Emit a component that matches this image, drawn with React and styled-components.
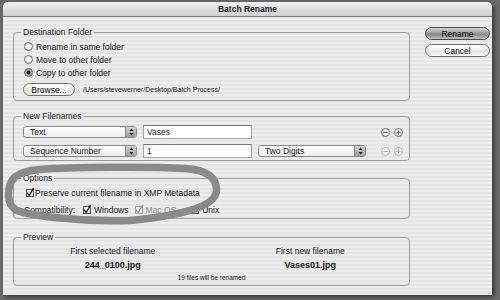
import React from "react";
import styled, { createGlobalStyle } from "styled-components";

const GlobalStyle = createGlobalStyle`
  html, body { margin: 0; padding: 0; }
  body {
    width: 500px;
    height: 300px;
    overflow: hidden;
    background: #6c6c6c;
    font-family: "Liberation Sans", Arial, sans-serif;
    color: #161616;
  }
`;

const Window = styled.div`
  position: relative;
  margin: 2px 0 0 3px;
  width: 489px;
  height: 293px;
  border-radius: 5px 5px 0 0;
  overflow: hidden;
  background: repeating-linear-gradient(to bottom, #ededed 0 2px, #e4e4e4 2px 4px);
  box-shadow: 2px 2px 5px rgba(0, 0, 0, 0.55);
`;

const TitleBar = styled.div`
  height: 14px;
  line-height: 14px;
  border-bottom: 1px solid #7a7a7a;
  background: linear-gradient(#f3f3f3, #cfcfcf);
  text-align: center;
  font-size: 8.5px;
  font-weight: bold;
  color: #222;
`;

const Body = styled.div`
  display: flex;
  padding: 10px 0 0 10px;
`;

const Main = styled.div`
  width: 397px;
  display: flex;
  flex-direction: column;
`;

const Side = styled.div`
  margin-left: 15px;
  display: flex;
  flex-direction: column;
  gap: 4px;
`;

const PushButton = styled.div`
  box-sizing: border-box;
  width: ${(p) => p.$w || 65}px;
  height: 13px;
  border-radius: 7px;
  border: 1px solid ${(p) => (p.$default ? "#4a4a4a" : "#6e6e6e")};
  background: ${(p) =>
    p.$default
      ? "linear-gradient(#d4d4d4 0%, #a0a0a0 45%, #858585 55%, #c0c0c0 100%)"
      : "linear-gradient(#ffffff 0%, #f2f2f2 45%, #e2e2e2 55%, #fbfbfb 100%)"};
  display: flex;
  align-items: center;
  justify-content: center;
  font-size: 8.5px;
  color: #111;
`;

const Group = styled.fieldset`
  margin: ${(p) => p.$gap || 0}px 0 0 0;
  padding: 0;
  border: 1px solid #9c9c9c;
  border-radius: 4px;
  min-width: 0;
`;

const Legend = styled.legend`
  padding: 0 2px;
  margin-left: 7px;
  font-size: 8.5px;
  line-height: 10px;
  color: #1a1a1a;
`;

const GroupBody = styled.div`
  padding: ${(p) => p.$pad};
`;

const OptionRow = styled.div`
  display: flex;
  align-items: center;
  height: 13px;
  gap: 3px;
  font-size: 8.5px;
  margin-left: 1px;
`;

const Radio = styled.span`
  box-sizing: border-box;
  width: 9px;
  height: 9px;
  border-radius: 50%;
  border: 1px solid #666;
  background: ${(p) =>
    p.$on
      ? "radial-gradient(circle, #222 0 1.6px, #9a9a9a 2.2px, #cfcfcf 100%)"
      : "radial-gradient(circle at 50% 70%, #ffffff 0%, #e6e6e6 100%)"};
`;

const BrowseRow = styled.div`
  display: flex;
  align-items: center;
  gap: 8px;
  margin-top: 4px;
`;

const PathText = styled.span`
  font-size: 7px;
  color: #222;
`;

const FileGrid = styled.div`
  display: grid;
  grid-template-columns: 114px 109px 108px auto;
  grid-auto-rows: 14px;
  column-gap: 6px;
  row-gap: 5px;
  align-items: center;
`;

const Select = styled.div`
  box-sizing: border-box;
  height: 12px;
  border: 1px solid #8a8a8a;
  border-radius: 3px;
  background: linear-gradient(#ffffff, #ececec);
  display: flex;
  align-items: stretch;
  font-size: 8.5px;
  overflow: hidden;
`;

const SelectLabel = styled.span`
  flex: 1;
  padding-left: 6px;
  display: flex;
  align-items: center;
`;

const SelectArrows = styled.span`
  width: 10px;
  border-left: 1px solid #8a8a8a;
  background: linear-gradient(#d2d2d2, #9c9c9c);
  display: flex;
  align-items: center;
  justify-content: center;
`;

const TextField = styled.div`
  box-sizing: border-box;
  height: 14px;
  border: 1px solid #a4a4a4;
  border-top-color: #777;
  background: #fff;
  font-size: 8.5px;
  padding-left: 3px;
  display: flex;
  align-items: center;
`;

const RowButtons = styled.div`
  display: flex;
  gap: 4px;
  margin-left: 9px;
`;

const CheckRow = styled.div`
  display: flex;
  align-items: center;
  height: 12px;
  font-size: 8.5px;
  margin-left: ${(p) => p.$ml || 0}px;
`;

const CheckItem = styled.span`
  display: flex;
  align-items: center;
  gap: 2px;
  margin-left: ${(p) => p.$ml || 0}px;
  color: ${(p) => (p.$disabled ? "#8a8a8a" : "#161616")};
`;

const Box = styled.span`
  box-sizing: border-box;
  width: 8px;
  height: 8px;
  border: 1px solid ${(p) => (p.$disabled ? "#a0a0a0" : "#555")};
  background: linear-gradient(#ffffff, #e2e2e2);
  display: flex;
  align-items: center;
  justify-content: center;
  margin-right: 1px;
`;

const OptionsBody = styled.div`
  display: flex;
  flex-direction: column;
  gap: 5px;
`;

const PreviewGrid = styled.div`
  display: grid;
  grid-template-columns: 1fr 1fr;
  text-align: center;
`;

const PreviewCaption = styled.div`
  font-size: 8.5px;
  line-height: 10px;
`;

const PreviewName = styled.div`
  font-size: 9px;
  line-height: 10px;
  font-weight: bold;
  margin-top: 4px;
`;

const PreviewNote = styled.div`
  grid-column: 1 / span 2;
  font-size: 6.5px;
  line-height: 8px;
  margin-top: 4px;
`;

const Annotation = styled.svg`
  position: absolute;
  left: 0;
  top: 0;
  pointer-events: none;
`;

function Check({ disabled }) {
  return (
    <svg width="8" height="8" viewBox="0 0 8 8" style={{ overflow: "visible" }}>
      <path
        d="M1 3.8 L3.2 6.4 L7.6 -0.8"
        fill="none"
        stroke={disabled ? "#9a9a9a" : "#1a1a1a"}
        strokeWidth="1.4"
      />
    </svg>
  );
}

function UpDown() {
  return (
    <svg width="5" height="8" viewBox="0 0 5 8">
      <path d="M2.5 0.5 L4.5 3 L0.5 3 Z M2.5 7.5 L4.5 5 L0.5 5 Z" fill="#222" />
    </svg>
  );
}

function RoundIcon({ plus, faded }) {
  const c = faded ? "#a8a8a8" : "#5a5a5a";
  return (
    <svg width="9" height="9" viewBox="0 0 9 9">
      <circle cx="4.5" cy="4.5" r="4" fill="#f4f4f4" stroke={c} strokeWidth="0.9" />
      <path d="M2.4 4.5 H6.6" stroke={c} strokeWidth="1" />
      {plus && <path d="M4.5 2.4 V6.6" stroke={c} strokeWidth="1" />}
    </svg>
  );
}

function PopUp({ label }) {
  return (
    <Select>
      <SelectLabel>{label}</SelectLabel>
      <SelectArrows>
        <UpDown />
      </SelectArrows>
    </Select>
  );
}

// hand-drawn loop around the Options box (page coordinates, shifted by the window offset)
const loop =
  "M 8.5 195 C 8.5 180 14 171.5 40 169.5 C 70 167 150 166.5 185 168.5 " +
  "C 210 170 216.5 180 216.5 190 C 216.5 203 195 214 130 220.5 " +
  "C 80 222 30 216 16 210 C 10 206 8.5 200 8.5 195 Z";

export default function App() {
  return (
    <>
      <GlobalStyle />
      <Window>
        <TitleBar>Batch Rename</TitleBar>
        <Body>
          <Main>
            <Group>
              <Legend>Destination Folder</Legend>
              <GroupBody $pad="3px 9px 4px 9px">
                <OptionRow>
                  <Radio /> Rename in same folder
                </OptionRow>
                <OptionRow>
                  <Radio /> Move to other folder
                </OptionRow>
                <OptionRow>
                  <Radio $on /> Copy to other folder
                </OptionRow>
                <BrowseRow>
                  <PushButton $w={52}>Browse...</PushButton>
                  <PathText>/Users/stevewerner/Desktop/Batch Process/</PathText>
                </BrowseRow>
              </GroupBody>
            </Group>

            <Group $gap={10}>
              <Legend>New Filenames</Legend>
              <GroupBody $pad="4px 9px 2px 9px">
                <FileGrid>
                  <PopUp label="Text" />
                  <TextField>Vases</TextField>
                  <span />
                  <RowButtons>
                    <RoundIcon />
                    <RoundIcon plus />
                  </RowButtons>
                  <PopUp label="Sequence Number" />
                  <TextField>1</TextField>
                  <PopUp label="Two Digits" />
                  <RowButtons>
                    <RoundIcon faded />
                    <RoundIcon plus faded />
                  </RowButtons>
                </FileGrid>
              </GroupBody>
            </Group>

            <Group $gap={12}>
              <Legend>Options</Legend>
              <GroupBody $pad="4px 9px 2px 10px">
                <OptionsBody>
                  <CheckRow $ml={2}>
                    <Box>
                      <Check />
                    </Box>
                    Preserve current filename in XMP Metadata
                  </CheckRow>
                  <CheckRow>
                    Compatibility:
                    <CheckItem $ml={8}>
                      <Box>
                        <Check />
                      </Box>
                      Windows
                    </CheckItem>
                    <CheckItem $ml={6} $disabled>
                      <Box $disabled>
                        <Check disabled />
                      </Box>
                      Mac OS
                    </CheckItem>
                    <CheckItem $ml={15}>
                      <Box />
                      Unix
                    </CheckItem>
                  </CheckRow>
                </OptionsBody>
              </GroupBody>
            </Group>

            <Group $gap={13}>
              <Legend>Preview</Legend>
              <GroupBody $pad="4px 0 3px 0">
                <PreviewGrid>
                  <div>
                    <PreviewCaption>First selected filename</PreviewCaption>
                    <PreviewName>244_0100.jpg</PreviewName>
                  </div>
                  <div>
                    <PreviewCaption>First new filename</PreviewCaption>
                    <PreviewName>Vases01.jpg</PreviewName>
                  </div>
                  <PreviewNote>19 files will be renamed</PreviewNote>
                </PreviewGrid>
              </GroupBody>
            </Group>
          </Main>

          <Side>
            <PushButton $default>Rename</PushButton>
            <PushButton>Cancel</PushButton>
          </Side>
        </Body>

        <Annotation width="489" height="293" viewBox="0 0 489 293">
          <path
            d={loop}
            fill="none"
            stroke="#8a8a8a"
            strokeWidth="7.5"
            strokeLinejoin="round"
            transform="translate(-3 -2)"
          />
        </Annotation>
      </Window>
    </>
  );
}
